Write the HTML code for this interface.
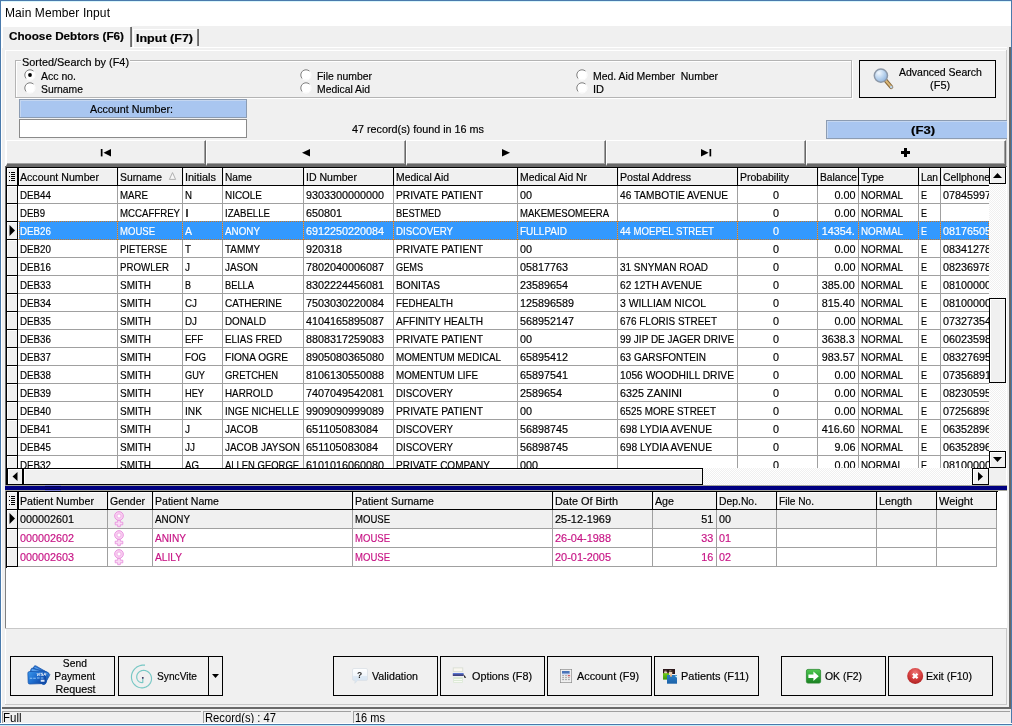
<!DOCTYPE html>
<html><head><meta charset="utf-8"><title>Main Member Input</title>
<style>
html,body{margin:0;padding:0;}
body{width:1012px;height:726px;overflow:hidden;background:#f0f0f0;position:relative;font-family:"Liberation Sans",sans-serif;font-size:11px;color:#000;}
div{position:absolute;box-sizing:border-box;}
.t{white-space:nowrap;line-height:13px;font-size:11px;-webkit-text-stroke:0.18px;}
.c{overflow:hidden;white-space:nowrap;line-height:13px;font-size:11px;-webkit-text-stroke:0.18px;}
.dith{background-image:repeating-conic-gradient(#ffffff 0 25%,#f0f0f0 0 50%);background-size:2px 2px;}
.btn{border:1px solid #000;background:#f0f0f0;}
.nav{background:#f0f0f0;border-top:1px solid #fff;border-left:1px solid #fff;border-right:1px solid #696969;border-bottom:2px solid #696969;box-shadow:inset -1px -1px 0 #a0a0a0;}
svg{position:absolute;overflow:visible;}
#w{left:0;top:0;width:1012px;height:726px;will-change:transform;}
</style></head><body><div id="w">

<div style="left:0px;top:0px;width:1012px;height:26px;background:#fff;"></div>
<div style="left:0px;top:0px;width:1012px;height:1px;background:#4a7aac;"></div>
<div style="left:1px;top:1px;width:1010px;height:1px;background:#d8f6fc;"></div>
<div style="left:0px;top:0px;width:1px;height:726px;background:#4a7aac;"></div>
<div style="left:1011px;top:0px;width:1px;height:726px;background:#4a7aac;"></div>
<div style="left:1px;top:26px;width:1px;height:699px;background:#fff;"></div>
<div class="t" style="left:5px;top:6px;font-size:12px;line-height:14px;letter-spacing:0.1px;-webkit-text-stroke:0;">Main Member Input</div>
<div style="left:2px;top:26px;width:129px;height:22px;border-top:1px solid #fff;border-left:1px solid #fff;"></div>
<div style="left:130px;top:27px;width:2px;height:20px;border-left:1px solid #808080;border-right:1px solid #696969;"></div>
<div class="t" style="left:9px;top:30px;font-weight:bold;"><span style="display:inline-block;transform:scaleX(1.063);transform-origin:0 50%;white-space:pre">Choose Debtors (F6)</span></div>
<div style="left:133px;top:29px;width:66px;height:18px;border-top:1px solid #fff;border-left:1px solid #fff;"></div>
<div style="left:197px;top:29px;width:2px;height:17px;border-left:1px solid #808080;border-right:1px solid #696969;"></div>
<div class="t" style="left:136px;top:32px;font-weight:bold;"><span style="display:inline-block;transform:scaleX(1.138);transform-origin:0 50%;white-space:pre">Input (F7)</span></div>
<div style="left:131px;top:47px;width:876px;height:1px;background:#fff;"></div>
<div style="left:5px;top:50px;width:1002px;height:1px;background:#fff;"></div>
<div style="left:5px;top:50px;width:1px;height:655px;background:#fff;"></div>
<div style="left:1006px;top:50px;width:1px;height:655px;background:#c8c8c8;"></div>
<div style="left:5px;top:704px;width:1002px;height:1px;background:#c8c8c8;"></div>
<div style="left:1009px;top:47px;width:2px;height:662px;background:#696969;"></div>
<div style="left:2px;top:707px;width:1009px;height:2px;background:#696969;"></div>
<div style="left:15px;top:60px;width:837px;height:38px;border:1px solid #b4b4b4;box-shadow:1px 1px 0 #fff, inset 1px 1px 0 #fff;"></div>
<div style="left:21px;top:56px;width:109px;height:12px;background:#f0f0f0;"></div>
<div class="t" style="left:22px;top:56px;"><span style="display:inline-block;transform:scaleX(0.989);transform-origin:0 50%;white-space:pre">Sorted/Search by (F4)</span></div>
<svg style="left:24px;top:69px" width="12" height="12" viewBox="0 0 12 12"><circle cx="6" cy="6" r="4.8" fill="#fff"/><path d="M2.3 9.7 A5.2 5.2 0 0 1 9.7 2.3" fill="none" stroke="#808080" stroke-width="1"/><path d="M2.3 9.7 A5.2 5.2 0 0 0 9.7 2.3" fill="none" stroke="#fbfbfb" stroke-width="1"/><circle cx="6" cy="6" r="1.9" fill="#000"/></svg>
<svg style="left:24px;top:82px" width="12" height="12" viewBox="0 0 12 12"><circle cx="6" cy="6" r="4.8" fill="#fff"/><path d="M2.3 9.7 A5.2 5.2 0 0 1 9.7 2.3" fill="none" stroke="#808080" stroke-width="1"/><path d="M2.3 9.7 A5.2 5.2 0 0 0 9.7 2.3" fill="none" stroke="#fbfbfb" stroke-width="1"/></svg>
<div class="t" style="left:41px;top:70px;"><span style="display:inline-block;transform:scaleX(0.954);transform-origin:0 50%;white-space:pre">Acc no.</span></div>
<div class="t" style="left:41px;top:83px;"><span style="display:inline-block;transform:scaleX(0.941);transform-origin:0 50%;white-space:pre">Surname</span></div>
<svg style="left:300px;top:69px" width="12" height="12" viewBox="0 0 12 12"><circle cx="6" cy="6" r="4.8" fill="#fff"/><path d="M2.3 9.7 A5.2 5.2 0 0 1 9.7 2.3" fill="none" stroke="#808080" stroke-width="1"/><path d="M2.3 9.7 A5.2 5.2 0 0 0 9.7 2.3" fill="none" stroke="#fbfbfb" stroke-width="1"/></svg>
<svg style="left:300px;top:82px" width="12" height="12" viewBox="0 0 12 12"><circle cx="6" cy="6" r="4.8" fill="#fff"/><path d="M2.3 9.7 A5.2 5.2 0 0 1 9.7 2.3" fill="none" stroke="#808080" stroke-width="1"/><path d="M2.3 9.7 A5.2 5.2 0 0 0 9.7 2.3" fill="none" stroke="#fbfbfb" stroke-width="1"/></svg>
<div class="t" style="left:317px;top:70px;"><span style="display:inline-block;transform:scaleX(0.947);transform-origin:0 50%;white-space:pre">File number</span></div>
<div class="t" style="left:317px;top:83px;"><span style="display:inline-block;transform:scaleX(0.942);transform-origin:0 50%;white-space:pre">Medical Aid</span></div>
<svg style="left:576px;top:69px" width="12" height="12" viewBox="0 0 12 12"><circle cx="6" cy="6" r="4.8" fill="#fff"/><path d="M2.3 9.7 A5.2 5.2 0 0 1 9.7 2.3" fill="none" stroke="#808080" stroke-width="1"/><path d="M2.3 9.7 A5.2 5.2 0 0 0 9.7 2.3" fill="none" stroke="#fbfbfb" stroke-width="1"/></svg>
<svg style="left:576px;top:82px" width="12" height="12" viewBox="0 0 12 12"><circle cx="6" cy="6" r="4.8" fill="#fff"/><path d="M2.3 9.7 A5.2 5.2 0 0 1 9.7 2.3" fill="none" stroke="#808080" stroke-width="1"/><path d="M2.3 9.7 A5.2 5.2 0 0 0 9.7 2.3" fill="none" stroke="#fbfbfb" stroke-width="1"/></svg>
<div class="t" style="left:593px;top:70px;"><span style="display:inline-block;transform:scaleX(0.951);transform-origin:0 50%;white-space:pre">Med. Aid Member  Number</span></div>
<div class="t" style="left:593px;top:83px;"><span style="display:inline-block;transform:scaleX(1.000);transform-origin:0 50%;white-space:pre">ID</span></div>
<div class="btn" style="left:859px;top:60px;width:137px;height:38px;"></div>
<div class="t" style="left:893px;top:66px;width:94px;text-align:center;"><span style="display:inline-block;transform:scaleX(0.956);transform-origin:50% 50%;white-space:pre">Advanced Search</span></div>
<div class="t" style="left:893px;top:79px;width:94px;text-align:center;"><span style="display:inline-block;transform:scaleX(0.992);transform-origin:50% 50%;white-space:pre">(F5)</span></div>
<svg style="left:873px;top:67px" width="22" height="23" viewBox="0 0 22 23">
<defs><radialGradient id="gl" cx="35%" cy="30%" r="75%"><stop offset="0" stop-color="#f2f8fe"/><stop offset="0.55" stop-color="#b9d3ee"/><stop offset="1" stop-color="#8fb2dc"/></radialGradient></defs>
<line x1="12.6" y1="13.4" x2="18.2" y2="20" stroke="#8a6c40" stroke-width="4.2" stroke-linecap="round"/>
<line x1="12.8" y1="13.6" x2="18" y2="19.6" stroke="#dcb877" stroke-width="2" stroke-linecap="round"/>
<circle cx="18.3" cy="20.1" r="1.3" fill="#b9d3ee"/>
<circle cx="7.9" cy="8.6" r="6.6" fill="url(#gl)" stroke="#8c98a8" stroke-width="1.5"/>
</svg>
<div style="left:19px;top:99px;width:228px;height:19px;background:#a9c6f0;border:1px solid #8c9cb2;box-shadow:inset 1px 1px 0 #c4d6f0;"></div>
<div class="t" style="left:17px;top:103px;width:228px;text-align:center;"><span style="display:inline-block;transform:scaleX(0.977);transform-origin:50% 50%;white-space:pre">Account Number:</span></div>
<div style="left:19px;top:119px;width:228px;height:19px;background:#fff;border:1px solid #8a8a8a;"></div>
<div class="t" style="left:352px;top:123px;"><span style="display:inline-block;transform:scaleX(0.981);transform-origin:0 50%;white-space:pre">47 record(s) found in 16 ms</span></div>
<div style="left:826px;top:120px;width:181px;height:19px;background:#a9c6f0;border:1px solid #8c9cb2;border-right:0;box-shadow:inset 1px 1px 0 #c4d6f0;"></div>
<div class="t" style="left:833px;top:124px;width:181px;text-align:center;font-weight:bold;"><span style="display:inline-block;transform:scaleX(1.190);transform-origin:50% 50%;white-space:pre">(F3)</span></div>
<div class="nav" style="left:6px;top:140px;width:200px;height:26px;"></div>
<svg style="left:101px;top:149px" width="10" height="10" viewBox="0 0 10 10"><rect x="-0.2" y="0" width="1.7" height="7.4" fill="#000"/><path d="M10 0 L10 7.4 L2.5 3.7 Z" fill="#000"/></svg>
<div class="nav" style="left:206px;top:140px;width:200px;height:26px;"></div>
<svg style="left:301px;top:149px" width="10" height="10" viewBox="0 0 10 10"><path d="M9 0 L9 7.4 L1 3.7 Z" fill="#000"/></svg>
<div class="nav" style="left:406px;top:140px;width:200px;height:26px;"></div>
<svg style="left:501px;top:149px" width="10" height="10" viewBox="0 0 10 10"><path d="M1 0 L1 7.4 L9 3.7 Z" fill="#000"/></svg>
<div class="nav" style="left:606px;top:140px;width:200px;height:26px;"></div>
<svg style="left:701px;top:149px" width="10" height="10" viewBox="0 0 10 10"><path d="M0 0 L0 7.4 L7.6 3.7 Z" fill="#000"/><rect x="8.5" y="0" width="1.7" height="7.4" fill="#000"/></svg>
<div class="nav" style="left:806px;top:140px;width:200px;height:26px;"></div>
<svg style="left:901px;top:148px" width="10" height="10" viewBox="0 0 10 10"><path d="M3 0 h3 v3 h3 v3 h-3 v3 h-3 v-3 h-3 v-3 h3 Z" fill="#000"/></svg>
<div style="left:5px;top:166px;width:1002px;height:320px;background:#fff;"></div>
<div style="left:5px;top:166px;width:1002px;height:1px;background:#696969;"></div>
<div style="left:5px;top:166px;width:1px;height:320px;background:#696969;"></div>
<div style="left:6px;top:167px;width:1000px;height:1px;background:#000;"></div>
<div style="left:6px;top:167px;width:1px;height:318px;background:#000;"></div>
<div style="left:7px;top:168px;width:982px;height:17px;background:#f0f0f0;"></div>
<div style="left:7px;top:168px;width:10px;height:17px;box-shadow:inset 1px 1px 0 #fff;"></div>
<div style="left:19px;top:168px;width:98px;height:17px;box-shadow:inset 1px 1px 0 #fff;"></div>
<div style="left:119px;top:168px;width:63px;height:17px;box-shadow:inset 1px 1px 0 #fff;"></div>
<div style="left:184px;top:168px;width:38px;height:17px;box-shadow:inset 1px 1px 0 #fff;"></div>
<div style="left:224px;top:168px;width:79px;height:17px;box-shadow:inset 1px 1px 0 #fff;"></div>
<div style="left:305px;top:168px;width:88px;height:17px;box-shadow:inset 1px 1px 0 #fff;"></div>
<div style="left:395px;top:168px;width:122px;height:17px;box-shadow:inset 1px 1px 0 #fff;"></div>
<div style="left:519px;top:168px;width:98px;height:17px;box-shadow:inset 1px 1px 0 #fff;"></div>
<div style="left:619px;top:168px;width:118px;height:17px;box-shadow:inset 1px 1px 0 #fff;"></div>
<div style="left:739px;top:168px;width:78px;height:17px;box-shadow:inset 1px 1px 0 #fff;"></div>
<div style="left:819px;top:168px;width:39px;height:17px;box-shadow:inset 1px 1px 0 #fff;"></div>
<div style="left:860px;top:168px;width:58px;height:17px;box-shadow:inset 1px 1px 0 #fff;"></div>
<div style="left:920px;top:168px;width:20px;height:17px;box-shadow:inset 1px 1px 0 #fff;"></div>
<div style="left:942px;top:168px;width:47px;height:17px;box-shadow:inset 1px 1px 0 #fff;"></div>
<div style="left:7px;top:185px;width:982px;height:1px;background:#000;"></div>
<div style="left:17px;top:168px;width:2px;height:18px;background:#000;"></div>
<div style="left:117px;top:168px;width:1px;height:18px;background:#000;"></div>
<div class="c" style="left:20px;top:171px;width:97px;height:14px"><span style="display:inline-block;transform:scaleX(0.964);transform-origin:0 50%;white-space:pre">Account Number</span></div>
<div style="left:182px;top:168px;width:1px;height:18px;background:#000;"></div>
<div class="c" style="left:120px;top:171px;width:62px;height:14px"><span style="display:inline-block;transform:scaleX(0.941);transform-origin:0 50%;white-space:pre">Surname</span></div>
<div style="left:222px;top:168px;width:1px;height:18px;background:#000;"></div>
<div class="c" style="left:185px;top:171px;width:37px;height:14px"><span style="display:inline-block;transform:scaleX(0.994);transform-origin:0 50%;white-space:pre">Initials</span></div>
<div style="left:303px;top:168px;width:1px;height:18px;background:#000;"></div>
<div class="c" style="left:225px;top:171px;width:78px;height:14px"><span style="display:inline-block;transform:scaleX(0.920);transform-origin:0 50%;white-space:pre">Name</span></div>
<div style="left:393px;top:168px;width:1px;height:18px;background:#000;"></div>
<div class="c" style="left:306px;top:171px;width:87px;height:14px"><span style="display:inline-block;transform:scaleX(0.959);transform-origin:0 50%;white-space:pre">ID Number</span></div>
<div style="left:517px;top:168px;width:1px;height:18px;background:#000;"></div>
<div class="c" style="left:396px;top:171px;width:121px;height:14px"><span style="display:inline-block;transform:scaleX(0.942);transform-origin:0 50%;white-space:pre">Medical Aid</span></div>
<div style="left:617px;top:168px;width:1px;height:18px;background:#000;"></div>
<div class="c" style="left:520px;top:171px;width:97px;height:14px"><span style="display:inline-block;transform:scaleX(0.945);transform-origin:0 50%;white-space:pre">Medical Aid Nr</span></div>
<div style="left:737px;top:168px;width:1px;height:18px;background:#000;"></div>
<div class="c" style="left:620px;top:171px;width:117px;height:14px"><span style="display:inline-block;transform:scaleX(0.968);transform-origin:0 50%;white-space:pre">Postal Address</span></div>
<div style="left:817px;top:168px;width:1px;height:18px;background:#000;"></div>
<div class="c" style="left:740px;top:171px;width:77px;height:14px"><span style="display:inline-block;transform:scaleX(0.954);transform-origin:0 50%;white-space:pre">Probability</span></div>
<div style="left:858px;top:168px;width:1px;height:18px;background:#000;"></div>
<div class="c" style="left:820px;top:171px;width:38px;height:14px"><span style="display:inline-block;transform:scaleX(0.931);transform-origin:0 50%;white-space:pre">Balance</span></div>
<div style="left:918px;top:168px;width:1px;height:18px;background:#000;"></div>
<div class="c" style="left:861px;top:171px;width:57px;height:14px"><span style="display:inline-block;transform:scaleX(0.965);transform-origin:0 50%;white-space:pre">Type</span></div>
<div style="left:940px;top:168px;width:1px;height:18px;background:#000;"></div>
<div class="c" style="left:921px;top:171px;width:19px;height:14px"><span style="display:inline-block;transform:scaleX(0.926);transform-origin:0 50%;white-space:pre">Lan</span></div>
<div style="left:989px;top:168px;width:1px;height:18px;background:#000;"></div>
<div class="c" style="left:943px;top:171px;width:46px;height:14px"><span style="display:inline-block;transform:scaleX(0.949);transform-origin:0 50%;white-space:pre">Cellphone</span></div>
<svg style="left:169px;top:172px" width="8" height="8" viewBox="0 0 8 8"><path d="M3.5 0.6 L6.6 7.4 L0.4 7.4 Z" fill="#f8f8f8" stroke="#a8a8a8" stroke-width="0.9"/></svg>
<svg style="left:9px;top:172px" width="8" height="9" viewBox="0 0 8 9" shape-rendering="crispEdges"><g fill="#000"><rect x="0" y="0" width="1" height="1"/><rect x="0" y="4" width="1" height="1"/><rect x="0" y="8" width="1" height="1"/><rect x="2" y="0" width="4" height="1"/><rect x="2" y="2" width="4" height="1"/><rect x="2" y="4" width="4" height="1"/><rect x="2" y="6" width="4" height="1"/><rect x="2" y="8" width="4" height="1"/></g></svg>
<div style="left:7px;top:186px;width:982px;height:282px;overflow:hidden;">
<div style="left:0;top:0px;width:10px;height:17px;background:#f0f0f0;box-shadow:inset 1px 1px 0 #fff"></div>
<div style="left:0;top:17px;width:982px;height:1px;background:#a0a0a0"></div>
<div style="left:0;top:17px;width:11px;height:1px;background:#000"></div>
<div class="c" style="left:12.5px;top:3px;width:97.5px;height:15px;"><span style="display:inline-block;transform:scaleX(0.889);transform-origin:0 50%;white-space:pre">DEB44</span></div>
<div class="c" style="left:112.5px;top:3px;width:62.5px;height:15px;"><span style="display:inline-block;transform:scaleX(0.881);transform-origin:0 50%;white-space:pre">MARE</span></div>
<div class="c" style="left:177.5px;top:3px;width:37.5px;height:15px;"><span style="display:inline-block;transform:scaleX(0.881);transform-origin:0 50%;white-space:pre">N</span></div>
<div class="c" style="left:217.5px;top:3px;width:78.5px;height:15px;"><span style="display:inline-block;transform:scaleX(0.903);transform-origin:0 50%;white-space:pre">NICOLE</span></div>
<div class="c" style="left:298.5px;top:3px;width:87.5px;height:15px;"><span style="display:inline-block;transform:scaleX(0.981);transform-origin:0 50%;white-space:pre">9303300000000</span></div>
<div class="c" style="left:388.5px;top:3px;width:121.5px;height:15px;"><span style="display:inline-block;transform:scaleX(0.932);transform-origin:0 50%;white-space:pre">PRIVATE PATIENT</span></div>
<div class="c" style="left:512.5px;top:3px;width:97.5px;height:15px;"><span style="display:inline-block;transform:scaleX(0.981);transform-origin:0 50%;white-space:pre">00</span></div>
<div class="c" style="left:612.5px;top:3px;width:117.5px;height:15px;"><span style="display:inline-block;transform:scaleX(0.920);transform-origin:0 50%;white-space:pre">46 TAMBOTIE AVENUE</span></div>
<div class="c" style="left:732.5px;top:3px;width:77.5px;height:15px;text-align:center;padding-right:4px;"><span style="display:inline-block;transform:scaleX(0.981);transform-origin:50% 50%;white-space:pre">0</span></div>
<div class="c" style="left:812.5px;top:3px;width:38.5px;height:15px;text-align:right;padding-right:3px;"><span style="display:inline-block;transform:scaleX(0.981);transform-origin:100% 50%;white-space:pre">0.00</span></div>
<div class="c" style="left:853.5px;top:3px;width:57.5px;height:15px;"><span style="display:inline-block;transform:scaleX(0.892);transform-origin:0 50%;white-space:pre">NORMAL</span></div>
<div class="c" style="left:913.5px;top:3px;width:19.5px;height:15px;"><span style="display:inline-block;transform:scaleX(0.818);transform-origin:0 50%;white-space:pre">E</span></div>
<div class="c" style="left:935.5px;top:3px;width:46.5px;height:15px;"><span style="display:inline-block;transform:scaleX(0.981);transform-origin:0 50%;white-space:pre">0784599700</span></div>
<div style="left:0;top:18px;width:10px;height:17px;background:#f0f0f0;box-shadow:inset 1px 1px 0 #fff"></div>
<div style="left:0;top:35px;width:982px;height:1px;background:#a0a0a0"></div>
<div style="left:0;top:35px;width:11px;height:1px;background:#000"></div>
<div class="c" style="left:12.5px;top:21px;width:97.5px;height:15px;"><span style="display:inline-block;transform:scaleX(0.870);transform-origin:0 50%;white-space:pre">DEB9</span></div>
<div class="c" style="left:112.5px;top:21px;width:62.5px;height:15px;"><span style="display:inline-block;transform:scaleX(0.877);transform-origin:0 50%;white-space:pre">MCCAFFREY</span></div>
<div class="c" style="left:177.5px;top:21px;width:37.5px;height:15px;"><span style="display:inline-block;transform:scaleX(1.309);transform-origin:0 50%;white-space:pre">I</span></div>
<div class="c" style="left:217.5px;top:21px;width:78.5px;height:15px;"><span style="display:inline-block;transform:scaleX(0.876);transform-origin:0 50%;white-space:pre">IZABELLE</span></div>
<div class="c" style="left:298.5px;top:21px;width:87.5px;height:15px;"><span style="display:inline-block;transform:scaleX(0.981);transform-origin:0 50%;white-space:pre">650801</span></div>
<div class="c" style="left:388.5px;top:21px;width:121.5px;height:15px;"><span style="display:inline-block;transform:scaleX(0.846);transform-origin:0 50%;white-space:pre">BESTMED</span></div>
<div class="c" style="left:512.5px;top:21px;width:97.5px;height:15px;"><span style="display:inline-block;transform:scaleX(0.867);transform-origin:0 50%;white-space:pre">MAKEMESOMEERA</span></div>
<div class="c" style="left:732.5px;top:21px;width:77.5px;height:15px;text-align:center;padding-right:4px;"><span style="display:inline-block;transform:scaleX(0.981);transform-origin:50% 50%;white-space:pre">0</span></div>
<div class="c" style="left:812.5px;top:21px;width:38.5px;height:15px;text-align:right;padding-right:3px;"><span style="display:inline-block;transform:scaleX(0.981);transform-origin:100% 50%;white-space:pre">0.00</span></div>
<div class="c" style="left:853.5px;top:21px;width:57.5px;height:15px;"><span style="display:inline-block;transform:scaleX(0.892);transform-origin:0 50%;white-space:pre">NORMAL</span></div>
<div class="c" style="left:913.5px;top:21px;width:19.5px;height:15px;"><span style="display:inline-block;transform:scaleX(0.818);transform-origin:0 50%;white-space:pre">E</span></div>
<div style="left:0;top:36px;width:10px;height:17px;background:#f0f0f0;box-shadow:inset 1px 1px 0 #fff"></div>
<div style="left:0;top:53px;width:982px;height:1px;background:#a0a0a0"></div>
<div style="left:0;top:53px;width:11px;height:1px;background:#000"></div>
<div style="left:12px;top:35px;width:970px;height:19px;background:#3399ff;border:1px dotted #c87828;"></div>
<svg style="left:2px;top:39px" width="7" height="11" viewBox="0 0 7 11"><path d="M0.5 0 L6 5.5 L0.5 11 Z" fill="#000"/></svg>
<div class="c" style="left:12.5px;top:39px;width:97.5px;height:15px;color:#fff;"><span style="display:inline-block;transform:scaleX(0.889);transform-origin:0 50%;white-space:pre">DEB26</span></div>
<div class="c" style="left:112.5px;top:39px;width:62.5px;height:15px;color:#fff;"><span style="display:inline-block;transform:scaleX(0.868);transform-origin:0 50%;white-space:pre">MOUSE</span></div>
<div class="c" style="left:177.5px;top:39px;width:37.5px;height:15px;color:#fff;"><span style="display:inline-block;transform:scaleX(0.954);transform-origin:0 50%;white-space:pre">A</span></div>
<div class="c" style="left:217.5px;top:39px;width:78.5px;height:15px;color:#fff;"><span style="display:inline-block;transform:scaleX(0.895);transform-origin:0 50%;white-space:pre">ANONY</span></div>
<div class="c" style="left:298.5px;top:39px;width:87.5px;height:15px;color:#fff;"><span style="display:inline-block;transform:scaleX(0.981);transform-origin:0 50%;white-space:pre">6912250220084</span></div>
<div class="c" style="left:388.5px;top:39px;width:121.5px;height:15px;color:#fff;"><span style="display:inline-block;transform:scaleX(0.882);transform-origin:0 50%;white-space:pre">DISCOVERY</span></div>
<div class="c" style="left:512.5px;top:39px;width:97.5px;height:15px;color:#fff;"><span style="display:inline-block;transform:scaleX(0.908);transform-origin:0 50%;white-space:pre">FULLPAID</span></div>
<div class="c" style="left:612.5px;top:39px;width:117.5px;height:15px;color:#fff;"><span style="display:inline-block;transform:scaleX(0.877);transform-origin:0 50%;white-space:pre">44 MOEPEL STREET</span></div>
<div class="c" style="left:732.5px;top:39px;width:77.5px;height:15px;text-align:center;padding-right:4px;color:#fff;"><span style="display:inline-block;transform:scaleX(0.981);transform-origin:50% 50%;white-space:pre">0</span></div>
<div class="c" style="left:812.5px;top:39px;width:38.5px;height:15px;text-align:right;padding-right:3px;color:#fff;"><span style="display:inline-block;transform:scaleX(0.981);transform-origin:100% 50%;white-space:pre">14354.</span></div>
<div class="c" style="left:853.5px;top:39px;width:57.5px;height:15px;color:#fff;"><span style="display:inline-block;transform:scaleX(0.892);transform-origin:0 50%;white-space:pre">NORMAL</span></div>
<div class="c" style="left:913.5px;top:39px;width:19.5px;height:15px;color:#fff;"><span style="display:inline-block;transform:scaleX(0.818);transform-origin:0 50%;white-space:pre">E</span></div>
<div class="c" style="left:935.5px;top:39px;width:46.5px;height:15px;color:#fff;"><span style="display:inline-block;transform:scaleX(0.981);transform-origin:0 50%;white-space:pre">0817650500</span></div>
<div style="left:0;top:54px;width:10px;height:17px;background:#f0f0f0;box-shadow:inset 1px 1px 0 #fff"></div>
<div style="left:0;top:71px;width:982px;height:1px;background:#a0a0a0"></div>
<div style="left:0;top:71px;width:11px;height:1px;background:#000"></div>
<div class="c" style="left:12.5px;top:57px;width:97.5px;height:15px;"><span style="display:inline-block;transform:scaleX(0.889);transform-origin:0 50%;white-space:pre">DEB20</span></div>
<div class="c" style="left:112.5px;top:57px;width:62.5px;height:15px;"><span style="display:inline-block;transform:scaleX(0.864);transform-origin:0 50%;white-space:pre">PIETERSE</span></div>
<div class="c" style="left:177.5px;top:57px;width:37.5px;height:15px;"><span style="display:inline-block;transform:scaleX(0.893);transform-origin:0 50%;white-space:pre">T</span></div>
<div class="c" style="left:217.5px;top:57px;width:78.5px;height:15px;"><span style="display:inline-block;transform:scaleX(0.900);transform-origin:0 50%;white-space:pre">TAMMY</span></div>
<div class="c" style="left:298.5px;top:57px;width:87.5px;height:15px;"><span style="display:inline-block;transform:scaleX(0.981);transform-origin:0 50%;white-space:pre">920318</span></div>
<div class="c" style="left:388.5px;top:57px;width:121.5px;height:15px;"><span style="display:inline-block;transform:scaleX(0.932);transform-origin:0 50%;white-space:pre">PRIVATE PATIENT</span></div>
<div class="c" style="left:512.5px;top:57px;width:97.5px;height:15px;"><span style="display:inline-block;transform:scaleX(0.981);transform-origin:0 50%;white-space:pre">00</span></div>
<div class="c" style="left:732.5px;top:57px;width:77.5px;height:15px;text-align:center;padding-right:4px;"><span style="display:inline-block;transform:scaleX(0.981);transform-origin:50% 50%;white-space:pre">0</span></div>
<div class="c" style="left:812.5px;top:57px;width:38.5px;height:15px;text-align:right;padding-right:3px;"><span style="display:inline-block;transform:scaleX(0.981);transform-origin:100% 50%;white-space:pre">0.00</span></div>
<div class="c" style="left:853.5px;top:57px;width:57.5px;height:15px;"><span style="display:inline-block;transform:scaleX(0.892);transform-origin:0 50%;white-space:pre">NORMAL</span></div>
<div class="c" style="left:913.5px;top:57px;width:19.5px;height:15px;"><span style="display:inline-block;transform:scaleX(0.818);transform-origin:0 50%;white-space:pre">E</span></div>
<div class="c" style="left:935.5px;top:57px;width:46.5px;height:15px;"><span style="display:inline-block;transform:scaleX(0.981);transform-origin:0 50%;white-space:pre">0834127800</span></div>
<div style="left:0;top:72px;width:10px;height:17px;background:#f0f0f0;box-shadow:inset 1px 1px 0 #fff"></div>
<div style="left:0;top:89px;width:982px;height:1px;background:#a0a0a0"></div>
<div style="left:0;top:89px;width:11px;height:1px;background:#000"></div>
<div class="c" style="left:12.5px;top:75px;width:97.5px;height:15px;"><span style="display:inline-block;transform:scaleX(0.889);transform-origin:0 50%;white-space:pre">DEB16</span></div>
<div class="c" style="left:112.5px;top:75px;width:62.5px;height:15px;"><span style="display:inline-block;transform:scaleX(0.881);transform-origin:0 50%;white-space:pre">PROWLER</span></div>
<div class="c" style="left:177.5px;top:75px;width:37.5px;height:15px;"><span style="display:inline-block;transform:scaleX(0.909);transform-origin:0 50%;white-space:pre">J</span></div>
<div class="c" style="left:217.5px;top:75px;width:78.5px;height:15px;"><span style="display:inline-block;transform:scaleX(0.900);transform-origin:0 50%;white-space:pre">JASON</span></div>
<div class="c" style="left:298.5px;top:75px;width:87.5px;height:15px;"><span style="display:inline-block;transform:scaleX(0.981);transform-origin:0 50%;white-space:pre">7802040006087</span></div>
<div class="c" style="left:388.5px;top:75px;width:121.5px;height:15px;"><span style="display:inline-block;transform:scaleX(0.834);transform-origin:0 50%;white-space:pre">GEMS</span></div>
<div class="c" style="left:512.5px;top:75px;width:97.5px;height:15px;"><span style="display:inline-block;transform:scaleX(0.981);transform-origin:0 50%;white-space:pre">05817763</span></div>
<div class="c" style="left:612.5px;top:75px;width:117.5px;height:15px;"><span style="display:inline-block;transform:scaleX(0.905);transform-origin:0 50%;white-space:pre">31 SNYMAN ROAD</span></div>
<div class="c" style="left:732.5px;top:75px;width:77.5px;height:15px;text-align:center;padding-right:4px;"><span style="display:inline-block;transform:scaleX(0.981);transform-origin:50% 50%;white-space:pre">0</span></div>
<div class="c" style="left:812.5px;top:75px;width:38.5px;height:15px;text-align:right;padding-right:3px;"><span style="display:inline-block;transform:scaleX(0.981);transform-origin:100% 50%;white-space:pre">0.00</span></div>
<div class="c" style="left:853.5px;top:75px;width:57.5px;height:15px;"><span style="display:inline-block;transform:scaleX(0.892);transform-origin:0 50%;white-space:pre">NORMAL</span></div>
<div class="c" style="left:913.5px;top:75px;width:19.5px;height:15px;"><span style="display:inline-block;transform:scaleX(0.818);transform-origin:0 50%;white-space:pre">E</span></div>
<div class="c" style="left:935.5px;top:75px;width:46.5px;height:15px;"><span style="display:inline-block;transform:scaleX(0.981);transform-origin:0 50%;white-space:pre">0823697800</span></div>
<div style="left:0;top:90px;width:10px;height:17px;background:#f0f0f0;box-shadow:inset 1px 1px 0 #fff"></div>
<div style="left:0;top:107px;width:982px;height:1px;background:#a0a0a0"></div>
<div style="left:0;top:107px;width:11px;height:1px;background:#000"></div>
<div class="c" style="left:12.5px;top:93px;width:97.5px;height:15px;"><span style="display:inline-block;transform:scaleX(0.889);transform-origin:0 50%;white-space:pre">DEB33</span></div>
<div class="c" style="left:112.5px;top:93px;width:62.5px;height:15px;"><span style="display:inline-block;transform:scaleX(0.906);transform-origin:0 50%;white-space:pre">SMITH</span></div>
<div class="c" style="left:177.5px;top:93px;width:37.5px;height:15px;"><span style="display:inline-block;transform:scaleX(0.818);transform-origin:0 50%;white-space:pre">B</span></div>
<div class="c" style="left:217.5px;top:93px;width:78.5px;height:15px;"><span style="display:inline-block;transform:scaleX(0.847);transform-origin:0 50%;white-space:pre">BELLA</span></div>
<div class="c" style="left:298.5px;top:93px;width:87.5px;height:15px;"><span style="display:inline-block;transform:scaleX(0.981);transform-origin:0 50%;white-space:pre">8302224456081</span></div>
<div class="c" style="left:388.5px;top:93px;width:121.5px;height:15px;"><span style="display:inline-block;transform:scaleX(0.927);transform-origin:0 50%;white-space:pre">BONITAS</span></div>
<div class="c" style="left:512.5px;top:93px;width:97.5px;height:15px;"><span style="display:inline-block;transform:scaleX(0.981);transform-origin:0 50%;white-space:pre">23589654</span></div>
<div class="c" style="left:612.5px;top:93px;width:117.5px;height:15px;"><span style="display:inline-block;transform:scaleX(0.921);transform-origin:0 50%;white-space:pre">62 12TH AVENUE</span></div>
<div class="c" style="left:732.5px;top:93px;width:77.5px;height:15px;text-align:center;padding-right:4px;"><span style="display:inline-block;transform:scaleX(0.981);transform-origin:50% 50%;white-space:pre">0</span></div>
<div class="c" style="left:812.5px;top:93px;width:38.5px;height:15px;text-align:right;padding-right:3px;"><span style="display:inline-block;transform:scaleX(0.981);transform-origin:100% 50%;white-space:pre">385.00</span></div>
<div class="c" style="left:853.5px;top:93px;width:57.5px;height:15px;"><span style="display:inline-block;transform:scaleX(0.892);transform-origin:0 50%;white-space:pre">NORMAL</span></div>
<div class="c" style="left:913.5px;top:93px;width:19.5px;height:15px;"><span style="display:inline-block;transform:scaleX(0.818);transform-origin:0 50%;white-space:pre">E</span></div>
<div class="c" style="left:935.5px;top:93px;width:46.5px;height:15px;"><span style="display:inline-block;transform:scaleX(0.981);transform-origin:0 50%;white-space:pre">0810000000</span></div>
<div style="left:0;top:108px;width:10px;height:17px;background:#f0f0f0;box-shadow:inset 1px 1px 0 #fff"></div>
<div style="left:0;top:125px;width:982px;height:1px;background:#a0a0a0"></div>
<div style="left:0;top:125px;width:11px;height:1px;background:#000"></div>
<div class="c" style="left:12.5px;top:111px;width:97.5px;height:15px;"><span style="display:inline-block;transform:scaleX(0.889);transform-origin:0 50%;white-space:pre">DEB34</span></div>
<div class="c" style="left:112.5px;top:111px;width:62.5px;height:15px;"><span style="display:inline-block;transform:scaleX(0.906);transform-origin:0 50%;white-space:pre">SMITH</span></div>
<div class="c" style="left:177.5px;top:111px;width:37.5px;height:15px;"><span style="display:inline-block;transform:scaleX(0.893);transform-origin:0 50%;white-space:pre">CJ</span></div>
<div class="c" style="left:217.5px;top:111px;width:78.5px;height:15px;"><span style="display:inline-block;transform:scaleX(0.908);transform-origin:0 50%;white-space:pre">CATHERINE</span></div>
<div class="c" style="left:298.5px;top:111px;width:87.5px;height:15px;"><span style="display:inline-block;transform:scaleX(0.981);transform-origin:0 50%;white-space:pre">7503030220084</span></div>
<div class="c" style="left:388.5px;top:111px;width:121.5px;height:15px;"><span style="display:inline-block;transform:scaleX(0.883);transform-origin:0 50%;white-space:pre">FEDHEALTH</span></div>
<div class="c" style="left:512.5px;top:111px;width:97.5px;height:15px;"><span style="display:inline-block;transform:scaleX(0.981);transform-origin:0 50%;white-space:pre">125896589</span></div>
<div class="c" style="left:612.5px;top:111px;width:117.5px;height:15px;"><span style="display:inline-block;transform:scaleX(0.944);transform-origin:0 50%;white-space:pre">3 WILLIAM NICOL</span></div>
<div class="c" style="left:732.5px;top:111px;width:77.5px;height:15px;text-align:center;padding-right:4px;"><span style="display:inline-block;transform:scaleX(0.981);transform-origin:50% 50%;white-space:pre">0</span></div>
<div class="c" style="left:812.5px;top:111px;width:38.5px;height:15px;text-align:right;padding-right:3px;"><span style="display:inline-block;transform:scaleX(0.981);transform-origin:100% 50%;white-space:pre">815.40</span></div>
<div class="c" style="left:853.5px;top:111px;width:57.5px;height:15px;"><span style="display:inline-block;transform:scaleX(0.892);transform-origin:0 50%;white-space:pre">NORMAL</span></div>
<div class="c" style="left:913.5px;top:111px;width:19.5px;height:15px;"><span style="display:inline-block;transform:scaleX(0.818);transform-origin:0 50%;white-space:pre">E</span></div>
<div class="c" style="left:935.5px;top:111px;width:46.5px;height:15px;"><span style="display:inline-block;transform:scaleX(0.981);transform-origin:0 50%;white-space:pre">0810000000</span></div>
<div style="left:0;top:126px;width:10px;height:17px;background:#f0f0f0;box-shadow:inset 1px 1px 0 #fff"></div>
<div style="left:0;top:143px;width:982px;height:1px;background:#a0a0a0"></div>
<div style="left:0;top:143px;width:11px;height:1px;background:#000"></div>
<div class="c" style="left:12.5px;top:129px;width:97.5px;height:15px;"><span style="display:inline-block;transform:scaleX(0.889);transform-origin:0 50%;white-space:pre">DEB35</span></div>
<div class="c" style="left:112.5px;top:129px;width:62.5px;height:15px;"><span style="display:inline-block;transform:scaleX(0.906);transform-origin:0 50%;white-space:pre">SMITH</span></div>
<div class="c" style="left:177.5px;top:129px;width:37.5px;height:15px;"><span style="display:inline-block;transform:scaleX(0.893);transform-origin:0 50%;white-space:pre">DJ</span></div>
<div class="c" style="left:217.5px;top:129px;width:78.5px;height:15px;"><span style="display:inline-block;transform:scaleX(0.894);transform-origin:0 50%;white-space:pre">DONALD</span></div>
<div class="c" style="left:298.5px;top:129px;width:87.5px;height:15px;"><span style="display:inline-block;transform:scaleX(0.981);transform-origin:0 50%;white-space:pre">4104165895087</span></div>
<div class="c" style="left:388.5px;top:129px;width:121.5px;height:15px;"><span style="display:inline-block;transform:scaleX(0.922);transform-origin:0 50%;white-space:pre">AFFINITY HEALTH</span></div>
<div class="c" style="left:512.5px;top:129px;width:97.5px;height:15px;"><span style="display:inline-block;transform:scaleX(0.981);transform-origin:0 50%;white-space:pre">568952147</span></div>
<div class="c" style="left:612.5px;top:129px;width:117.5px;height:15px;"><span style="display:inline-block;transform:scaleX(0.902);transform-origin:0 50%;white-space:pre">676 FLORIS STREET</span></div>
<div class="c" style="left:732.5px;top:129px;width:77.5px;height:15px;text-align:center;padding-right:4px;"><span style="display:inline-block;transform:scaleX(0.981);transform-origin:50% 50%;white-space:pre">0</span></div>
<div class="c" style="left:812.5px;top:129px;width:38.5px;height:15px;text-align:right;padding-right:3px;"><span style="display:inline-block;transform:scaleX(0.981);transform-origin:100% 50%;white-space:pre">0.00</span></div>
<div class="c" style="left:853.5px;top:129px;width:57.5px;height:15px;"><span style="display:inline-block;transform:scaleX(0.892);transform-origin:0 50%;white-space:pre">NORMAL</span></div>
<div class="c" style="left:913.5px;top:129px;width:19.5px;height:15px;"><span style="display:inline-block;transform:scaleX(0.818);transform-origin:0 50%;white-space:pre">E</span></div>
<div class="c" style="left:935.5px;top:129px;width:46.5px;height:15px;"><span style="display:inline-block;transform:scaleX(0.981);transform-origin:0 50%;white-space:pre">0732735400</span></div>
<div style="left:0;top:144px;width:10px;height:17px;background:#f0f0f0;box-shadow:inset 1px 1px 0 #fff"></div>
<div style="left:0;top:161px;width:982px;height:1px;background:#a0a0a0"></div>
<div style="left:0;top:161px;width:11px;height:1px;background:#000"></div>
<div class="c" style="left:12.5px;top:147px;width:97.5px;height:15px;"><span style="display:inline-block;transform:scaleX(0.889);transform-origin:0 50%;white-space:pre">DEB36</span></div>
<div class="c" style="left:112.5px;top:147px;width:62.5px;height:15px;"><span style="display:inline-block;transform:scaleX(0.906);transform-origin:0 50%;white-space:pre">SMITH</span></div>
<div class="c" style="left:177.5px;top:147px;width:37.5px;height:15px;"><span style="display:inline-block;transform:scaleX(0.866);transform-origin:0 50%;white-space:pre">EFF</span></div>
<div class="c" style="left:217.5px;top:147px;width:78.5px;height:15px;"><span style="display:inline-block;transform:scaleX(0.888);transform-origin:0 50%;white-space:pre">ELIAS FRED</span></div>
<div class="c" style="left:298.5px;top:147px;width:87.5px;height:15px;"><span style="display:inline-block;transform:scaleX(0.981);transform-origin:0 50%;white-space:pre">8808317259083</span></div>
<div class="c" style="left:388.5px;top:147px;width:121.5px;height:15px;"><span style="display:inline-block;transform:scaleX(0.932);transform-origin:0 50%;white-space:pre">PRIVATE PATIENT</span></div>
<div class="c" style="left:512.5px;top:147px;width:97.5px;height:15px;"><span style="display:inline-block;transform:scaleX(0.981);transform-origin:0 50%;white-space:pre">00</span></div>
<div class="c" style="left:612.5px;top:147px;width:117.5px;height:15px;"><span style="display:inline-block;transform:scaleX(0.907);transform-origin:0 50%;white-space:pre">99 JIP DE JAGER DRIVE</span></div>
<div class="c" style="left:732.5px;top:147px;width:77.5px;height:15px;text-align:center;padding-right:4px;"><span style="display:inline-block;transform:scaleX(0.981);transform-origin:50% 50%;white-space:pre">0</span></div>
<div class="c" style="left:812.5px;top:147px;width:38.5px;height:15px;text-align:right;padding-right:3px;"><span style="display:inline-block;transform:scaleX(0.981);transform-origin:100% 50%;white-space:pre">3638.3</span></div>
<div class="c" style="left:853.5px;top:147px;width:57.5px;height:15px;"><span style="display:inline-block;transform:scaleX(0.892);transform-origin:0 50%;white-space:pre">NORMAL</span></div>
<div class="c" style="left:913.5px;top:147px;width:19.5px;height:15px;"><span style="display:inline-block;transform:scaleX(0.818);transform-origin:0 50%;white-space:pre">E</span></div>
<div class="c" style="left:935.5px;top:147px;width:46.5px;height:15px;"><span style="display:inline-block;transform:scaleX(0.981);transform-origin:0 50%;white-space:pre">0602359800</span></div>
<div style="left:0;top:162px;width:10px;height:17px;background:#f0f0f0;box-shadow:inset 1px 1px 0 #fff"></div>
<div style="left:0;top:179px;width:982px;height:1px;background:#a0a0a0"></div>
<div style="left:0;top:179px;width:11px;height:1px;background:#000"></div>
<div class="c" style="left:12.5px;top:165px;width:97.5px;height:15px;"><span style="display:inline-block;transform:scaleX(0.889);transform-origin:0 50%;white-space:pre">DEB37</span></div>
<div class="c" style="left:112.5px;top:165px;width:62.5px;height:15px;"><span style="display:inline-block;transform:scaleX(0.906);transform-origin:0 50%;white-space:pre">SMITH</span></div>
<div class="c" style="left:177.5px;top:165px;width:37.5px;height:15px;"><span style="display:inline-block;transform:scaleX(0.881);transform-origin:0 50%;white-space:pre">FOG</span></div>
<div class="c" style="left:217.5px;top:165px;width:78.5px;height:15px;"><span style="display:inline-block;transform:scaleX(0.920);transform-origin:0 50%;white-space:pre">FIONA OGRE</span></div>
<div class="c" style="left:298.5px;top:165px;width:87.5px;height:15px;"><span style="display:inline-block;transform:scaleX(0.981);transform-origin:0 50%;white-space:pre">8905080365080</span></div>
<div class="c" style="left:388.5px;top:165px;width:121.5px;height:15px;"><span style="display:inline-block;transform:scaleX(0.890);transform-origin:0 50%;white-space:pre">MOMENTUM MEDICAL</span></div>
<div class="c" style="left:512.5px;top:165px;width:97.5px;height:15px;"><span style="display:inline-block;transform:scaleX(0.981);transform-origin:0 50%;white-space:pre">65895412</span></div>
<div class="c" style="left:612.5px;top:165px;width:117.5px;height:15px;"><span style="display:inline-block;transform:scaleX(0.908);transform-origin:0 50%;white-space:pre">63 GARSFONTEIN</span></div>
<div class="c" style="left:732.5px;top:165px;width:77.5px;height:15px;text-align:center;padding-right:4px;"><span style="display:inline-block;transform:scaleX(0.981);transform-origin:50% 50%;white-space:pre">0</span></div>
<div class="c" style="left:812.5px;top:165px;width:38.5px;height:15px;text-align:right;padding-right:3px;"><span style="display:inline-block;transform:scaleX(0.981);transform-origin:100% 50%;white-space:pre">983.57</span></div>
<div class="c" style="left:853.5px;top:165px;width:57.5px;height:15px;"><span style="display:inline-block;transform:scaleX(0.892);transform-origin:0 50%;white-space:pre">NORMAL</span></div>
<div class="c" style="left:913.5px;top:165px;width:19.5px;height:15px;"><span style="display:inline-block;transform:scaleX(0.818);transform-origin:0 50%;white-space:pre">E</span></div>
<div class="c" style="left:935.5px;top:165px;width:46.5px;height:15px;"><span style="display:inline-block;transform:scaleX(0.981);transform-origin:0 50%;white-space:pre">0832769500</span></div>
<div style="left:0;top:180px;width:10px;height:17px;background:#f0f0f0;box-shadow:inset 1px 1px 0 #fff"></div>
<div style="left:0;top:197px;width:982px;height:1px;background:#a0a0a0"></div>
<div style="left:0;top:197px;width:11px;height:1px;background:#000"></div>
<div class="c" style="left:12.5px;top:183px;width:97.5px;height:15px;"><span style="display:inline-block;transform:scaleX(0.889);transform-origin:0 50%;white-space:pre">DEB38</span></div>
<div class="c" style="left:112.5px;top:183px;width:62.5px;height:15px;"><span style="display:inline-block;transform:scaleX(0.906);transform-origin:0 50%;white-space:pre">SMITH</span></div>
<div class="c" style="left:177.5px;top:183px;width:37.5px;height:15px;"><span style="display:inline-block;transform:scaleX(0.839);transform-origin:0 50%;white-space:pre">GUY</span></div>
<div class="c" style="left:217.5px;top:183px;width:78.5px;height:15px;"><span style="display:inline-block;transform:scaleX(0.859);transform-origin:0 50%;white-space:pre">GRETCHEN</span></div>
<div class="c" style="left:298.5px;top:183px;width:87.5px;height:15px;"><span style="display:inline-block;transform:scaleX(0.981);transform-origin:0 50%;white-space:pre">8106130550088</span></div>
<div class="c" style="left:388.5px;top:183px;width:121.5px;height:15px;"><span style="display:inline-block;transform:scaleX(0.889);transform-origin:0 50%;white-space:pre">MOMENTUM LIFE</span></div>
<div class="c" style="left:512.5px;top:183px;width:97.5px;height:15px;"><span style="display:inline-block;transform:scaleX(0.981);transform-origin:0 50%;white-space:pre">65897541</span></div>
<div class="c" style="left:612.5px;top:183px;width:117.5px;height:15px;"><span style="display:inline-block;transform:scaleX(0.931);transform-origin:0 50%;white-space:pre">1056 WOODHILL DRIVE</span></div>
<div class="c" style="left:732.5px;top:183px;width:77.5px;height:15px;text-align:center;padding-right:4px;"><span style="display:inline-block;transform:scaleX(0.981);transform-origin:50% 50%;white-space:pre">0</span></div>
<div class="c" style="left:812.5px;top:183px;width:38.5px;height:15px;text-align:right;padding-right:3px;"><span style="display:inline-block;transform:scaleX(0.981);transform-origin:100% 50%;white-space:pre">0.00</span></div>
<div class="c" style="left:853.5px;top:183px;width:57.5px;height:15px;"><span style="display:inline-block;transform:scaleX(0.892);transform-origin:0 50%;white-space:pre">NORMAL</span></div>
<div class="c" style="left:913.5px;top:183px;width:19.5px;height:15px;"><span style="display:inline-block;transform:scaleX(0.818);transform-origin:0 50%;white-space:pre">E</span></div>
<div class="c" style="left:935.5px;top:183px;width:46.5px;height:15px;"><span style="display:inline-block;transform:scaleX(0.981);transform-origin:0 50%;white-space:pre">0735689100</span></div>
<div style="left:0;top:198px;width:10px;height:17px;background:#f0f0f0;box-shadow:inset 1px 1px 0 #fff"></div>
<div style="left:0;top:215px;width:982px;height:1px;background:#a0a0a0"></div>
<div style="left:0;top:215px;width:11px;height:1px;background:#000"></div>
<div class="c" style="left:12.5px;top:201px;width:97.5px;height:15px;"><span style="display:inline-block;transform:scaleX(0.889);transform-origin:0 50%;white-space:pre">DEB39</span></div>
<div class="c" style="left:112.5px;top:201px;width:62.5px;height:15px;"><span style="display:inline-block;transform:scaleX(0.906);transform-origin:0 50%;white-space:pre">SMITH</span></div>
<div class="c" style="left:177.5px;top:201px;width:37.5px;height:15px;"><span style="display:inline-block;transform:scaleX(0.840);transform-origin:0 50%;white-space:pre">HEY</span></div>
<div class="c" style="left:217.5px;top:201px;width:78.5px;height:15px;"><span style="display:inline-block;transform:scaleX(0.892);transform-origin:0 50%;white-space:pre">HARROLD</span></div>
<div class="c" style="left:298.5px;top:201px;width:87.5px;height:15px;"><span style="display:inline-block;transform:scaleX(0.981);transform-origin:0 50%;white-space:pre">7407049542081</span></div>
<div class="c" style="left:388.5px;top:201px;width:121.5px;height:15px;"><span style="display:inline-block;transform:scaleX(0.882);transform-origin:0 50%;white-space:pre">DISCOVERY</span></div>
<div class="c" style="left:512.5px;top:201px;width:97.5px;height:15px;"><span style="display:inline-block;transform:scaleX(0.981);transform-origin:0 50%;white-space:pre">2589654</span></div>
<div class="c" style="left:612.5px;top:201px;width:117.5px;height:15px;"><span style="display:inline-block;transform:scaleX(0.975);transform-origin:0 50%;white-space:pre">6325 ZANINI</span></div>
<div class="c" style="left:732.5px;top:201px;width:77.5px;height:15px;text-align:center;padding-right:4px;"><span style="display:inline-block;transform:scaleX(0.981);transform-origin:50% 50%;white-space:pre">0</span></div>
<div class="c" style="left:812.5px;top:201px;width:38.5px;height:15px;text-align:right;padding-right:3px;"><span style="display:inline-block;transform:scaleX(0.981);transform-origin:100% 50%;white-space:pre">0.00</span></div>
<div class="c" style="left:853.5px;top:201px;width:57.5px;height:15px;"><span style="display:inline-block;transform:scaleX(0.892);transform-origin:0 50%;white-space:pre">NORMAL</span></div>
<div class="c" style="left:913.5px;top:201px;width:19.5px;height:15px;"><span style="display:inline-block;transform:scaleX(0.818);transform-origin:0 50%;white-space:pre">E</span></div>
<div class="c" style="left:935.5px;top:201px;width:46.5px;height:15px;"><span style="display:inline-block;transform:scaleX(0.981);transform-origin:0 50%;white-space:pre">0823059500</span></div>
<div style="left:0;top:216px;width:10px;height:17px;background:#f0f0f0;box-shadow:inset 1px 1px 0 #fff"></div>
<div style="left:0;top:233px;width:982px;height:1px;background:#a0a0a0"></div>
<div style="left:0;top:233px;width:11px;height:1px;background:#000"></div>
<div class="c" style="left:12.5px;top:219px;width:97.5px;height:15px;"><span style="display:inline-block;transform:scaleX(0.889);transform-origin:0 50%;white-space:pre">DEB40</span></div>
<div class="c" style="left:112.5px;top:219px;width:62.5px;height:15px;"><span style="display:inline-block;transform:scaleX(0.906);transform-origin:0 50%;white-space:pre">SMITH</span></div>
<div class="c" style="left:177.5px;top:219px;width:37.5px;height:15px;"><span style="display:inline-block;transform:scaleX(0.927);transform-origin:0 50%;white-space:pre">INK</span></div>
<div class="c" style="left:217.5px;top:219px;width:78.5px;height:15px;"><span style="display:inline-block;transform:scaleX(0.884);transform-origin:0 50%;white-space:pre">INGE NICHELLE</span></div>
<div class="c" style="left:298.5px;top:219px;width:87.5px;height:15px;"><span style="display:inline-block;transform:scaleX(0.981);transform-origin:0 50%;white-space:pre">9909090999089</span></div>
<div class="c" style="left:388.5px;top:219px;width:121.5px;height:15px;"><span style="display:inline-block;transform:scaleX(0.932);transform-origin:0 50%;white-space:pre">PRIVATE PATIENT</span></div>
<div class="c" style="left:512.5px;top:219px;width:97.5px;height:15px;"><span style="display:inline-block;transform:scaleX(0.981);transform-origin:0 50%;white-space:pre">00</span></div>
<div class="c" style="left:612.5px;top:219px;width:117.5px;height:15px;"><span style="display:inline-block;transform:scaleX(0.897);transform-origin:0 50%;white-space:pre">6525 MORE STREET</span></div>
<div class="c" style="left:732.5px;top:219px;width:77.5px;height:15px;text-align:center;padding-right:4px;"><span style="display:inline-block;transform:scaleX(0.981);transform-origin:50% 50%;white-space:pre">0</span></div>
<div class="c" style="left:812.5px;top:219px;width:38.5px;height:15px;text-align:right;padding-right:3px;"><span style="display:inline-block;transform:scaleX(0.981);transform-origin:100% 50%;white-space:pre">0.00</span></div>
<div class="c" style="left:853.5px;top:219px;width:57.5px;height:15px;"><span style="display:inline-block;transform:scaleX(0.892);transform-origin:0 50%;white-space:pre">NORMAL</span></div>
<div class="c" style="left:913.5px;top:219px;width:19.5px;height:15px;"><span style="display:inline-block;transform:scaleX(0.818);transform-origin:0 50%;white-space:pre">E</span></div>
<div class="c" style="left:935.5px;top:219px;width:46.5px;height:15px;"><span style="display:inline-block;transform:scaleX(0.981);transform-origin:0 50%;white-space:pre">0725689800</span></div>
<div style="left:0;top:234px;width:10px;height:17px;background:#f0f0f0;box-shadow:inset 1px 1px 0 #fff"></div>
<div style="left:0;top:251px;width:982px;height:1px;background:#a0a0a0"></div>
<div style="left:0;top:251px;width:11px;height:1px;background:#000"></div>
<div class="c" style="left:12.5px;top:237px;width:97.5px;height:15px;"><span style="display:inline-block;transform:scaleX(0.889);transform-origin:0 50%;white-space:pre">DEB41</span></div>
<div class="c" style="left:112.5px;top:237px;width:62.5px;height:15px;"><span style="display:inline-block;transform:scaleX(0.906);transform-origin:0 50%;white-space:pre">SMITH</span></div>
<div class="c" style="left:177.5px;top:237px;width:37.5px;height:15px;"><span style="display:inline-block;transform:scaleX(0.909);transform-origin:0 50%;white-space:pre">J</span></div>
<div class="c" style="left:217.5px;top:237px;width:78.5px;height:15px;"><span style="display:inline-block;transform:scaleX(0.900);transform-origin:0 50%;white-space:pre">JACOB</span></div>
<div class="c" style="left:298.5px;top:237px;width:87.5px;height:15px;"><span style="display:inline-block;transform:scaleX(0.992);transform-origin:0 50%;white-space:pre">651105083084</span></div>
<div class="c" style="left:388.5px;top:237px;width:121.5px;height:15px;"><span style="display:inline-block;transform:scaleX(0.882);transform-origin:0 50%;white-space:pre">DISCOVERY</span></div>
<div class="c" style="left:512.5px;top:237px;width:97.5px;height:15px;"><span style="display:inline-block;transform:scaleX(0.981);transform-origin:0 50%;white-space:pre">56898745</span></div>
<div class="c" style="left:612.5px;top:237px;width:117.5px;height:15px;"><span style="display:inline-block;transform:scaleX(0.933);transform-origin:0 50%;white-space:pre">698 LYDIA AVENUE</span></div>
<div class="c" style="left:732.5px;top:237px;width:77.5px;height:15px;text-align:center;padding-right:4px;"><span style="display:inline-block;transform:scaleX(0.981);transform-origin:50% 50%;white-space:pre">0</span></div>
<div class="c" style="left:812.5px;top:237px;width:38.5px;height:15px;text-align:right;padding-right:3px;"><span style="display:inline-block;transform:scaleX(0.981);transform-origin:100% 50%;white-space:pre">416.60</span></div>
<div class="c" style="left:853.5px;top:237px;width:57.5px;height:15px;"><span style="display:inline-block;transform:scaleX(0.892);transform-origin:0 50%;white-space:pre">NORMAL</span></div>
<div class="c" style="left:913.5px;top:237px;width:19.5px;height:15px;"><span style="display:inline-block;transform:scaleX(0.818);transform-origin:0 50%;white-space:pre">E</span></div>
<div class="c" style="left:935.5px;top:237px;width:46.5px;height:15px;"><span style="display:inline-block;transform:scaleX(0.981);transform-origin:0 50%;white-space:pre">0635289600</span></div>
<div style="left:0;top:252px;width:10px;height:17px;background:#f0f0f0;box-shadow:inset 1px 1px 0 #fff"></div>
<div style="left:0;top:269px;width:982px;height:1px;background:#a0a0a0"></div>
<div style="left:0;top:269px;width:11px;height:1px;background:#000"></div>
<div class="c" style="left:12.5px;top:255px;width:97.5px;height:15px;"><span style="display:inline-block;transform:scaleX(0.889);transform-origin:0 50%;white-space:pre">DEB45</span></div>
<div class="c" style="left:112.5px;top:255px;width:62.5px;height:15px;"><span style="display:inline-block;transform:scaleX(0.906);transform-origin:0 50%;white-space:pre">SMITH</span></div>
<div class="c" style="left:177.5px;top:255px;width:37.5px;height:15px;"><span style="display:inline-block;transform:scaleX(0.909);transform-origin:0 50%;white-space:pre">JJ</span></div>
<div class="c" style="left:217.5px;top:255px;width:78.5px;height:15px;"><span style="display:inline-block;transform:scaleX(0.904);transform-origin:0 50%;white-space:pre">JACOB JAYSON</span></div>
<div class="c" style="left:298.5px;top:255px;width:87.5px;height:15px;"><span style="display:inline-block;transform:scaleX(0.992);transform-origin:0 50%;white-space:pre">651105083084</span></div>
<div class="c" style="left:388.5px;top:255px;width:121.5px;height:15px;"><span style="display:inline-block;transform:scaleX(0.882);transform-origin:0 50%;white-space:pre">DISCOVERY</span></div>
<div class="c" style="left:512.5px;top:255px;width:97.5px;height:15px;"><span style="display:inline-block;transform:scaleX(0.981);transform-origin:0 50%;white-space:pre">56898745</span></div>
<div class="c" style="left:612.5px;top:255px;width:117.5px;height:15px;"><span style="display:inline-block;transform:scaleX(0.933);transform-origin:0 50%;white-space:pre">698 LYDIA AVENUE</span></div>
<div class="c" style="left:732.5px;top:255px;width:77.5px;height:15px;text-align:center;padding-right:4px;"><span style="display:inline-block;transform:scaleX(0.981);transform-origin:50% 50%;white-space:pre">0</span></div>
<div class="c" style="left:812.5px;top:255px;width:38.5px;height:15px;text-align:right;padding-right:3px;"><span style="display:inline-block;transform:scaleX(0.981);transform-origin:100% 50%;white-space:pre">9.06</span></div>
<div class="c" style="left:853.5px;top:255px;width:57.5px;height:15px;"><span style="display:inline-block;transform:scaleX(0.892);transform-origin:0 50%;white-space:pre">NORMAL</span></div>
<div class="c" style="left:913.5px;top:255px;width:19.5px;height:15px;"><span style="display:inline-block;transform:scaleX(0.818);transform-origin:0 50%;white-space:pre">E</span></div>
<div class="c" style="left:935.5px;top:255px;width:46.5px;height:15px;"><span style="display:inline-block;transform:scaleX(0.981);transform-origin:0 50%;white-space:pre">0635289600</span></div>
<div style="left:0;top:270px;width:10px;height:17px;background:#f0f0f0;box-shadow:inset 1px 1px 0 #fff"></div>
<div style="left:0;top:287px;width:982px;height:1px;background:#a0a0a0"></div>
<div style="left:0;top:287px;width:11px;height:1px;background:#000"></div>
<div class="c" style="left:12.5px;top:273px;width:97.5px;height:15px;"><span style="display:inline-block;transform:scaleX(0.889);transform-origin:0 50%;white-space:pre">DEB32</span></div>
<div class="c" style="left:112.5px;top:273px;width:62.5px;height:15px;"><span style="display:inline-block;transform:scaleX(0.906);transform-origin:0 50%;white-space:pre">SMITH</span></div>
<div class="c" style="left:177.5px;top:273px;width:37.5px;height:15px;"><span style="display:inline-block;transform:scaleX(0.881);transform-origin:0 50%;white-space:pre">AG</span></div>
<div class="c" style="left:217.5px;top:273px;width:78.5px;height:15px;"><span style="display:inline-block;transform:scaleX(0.859);transform-origin:0 50%;white-space:pre">ALLEN GEORGE</span></div>
<div class="c" style="left:298.5px;top:273px;width:87.5px;height:15px;"><span style="display:inline-block;transform:scaleX(0.981);transform-origin:0 50%;white-space:pre">6101016060080</span></div>
<div class="c" style="left:388.5px;top:273px;width:121.5px;height:15px;"><span style="display:inline-block;transform:scaleX(0.910);transform-origin:0 50%;white-space:pre">PRIVATE COMPANY</span></div>
<div class="c" style="left:512.5px;top:273px;width:97.5px;height:15px;"><span style="display:inline-block;transform:scaleX(0.981);transform-origin:0 50%;white-space:pre">000</span></div>
<div class="c" style="left:732.5px;top:273px;width:77.5px;height:15px;text-align:center;padding-right:4px;"><span style="display:inline-block;transform:scaleX(0.981);transform-origin:50% 50%;white-space:pre">0</span></div>
<div class="c" style="left:812.5px;top:273px;width:38.5px;height:15px;text-align:right;padding-right:3px;"><span style="display:inline-block;transform:scaleX(0.981);transform-origin:100% 50%;white-space:pre">0.00</span></div>
<div class="c" style="left:853.5px;top:273px;width:57.5px;height:15px;"><span style="display:inline-block;transform:scaleX(0.892);transform-origin:0 50%;white-space:pre">NORMAL</span></div>
<div class="c" style="left:913.5px;top:273px;width:19.5px;height:15px;"><span style="display:inline-block;transform:scaleX(0.818);transform-origin:0 50%;white-space:pre">E</span></div>
<div class="c" style="left:935.5px;top:273px;width:46.5px;height:15px;"><span style="display:inline-block;transform:scaleX(0.981);transform-origin:0 50%;white-space:pre">0810000000</span></div>
<div style="left:10px;top:0;width:1px;height:282px;background:#000"></div>
<div style="left:110px;top:0;width:1px;height:282px;background:#a0a0a0"></div>
<div style="left:175px;top:0;width:1px;height:282px;background:#a0a0a0"></div>
<div style="left:215px;top:0;width:1px;height:282px;background:#a0a0a0"></div>
<div style="left:296px;top:0;width:1px;height:282px;background:#a0a0a0"></div>
<div style="left:386px;top:0;width:1px;height:282px;background:#a0a0a0"></div>
<div style="left:510px;top:0;width:1px;height:282px;background:#a0a0a0"></div>
<div style="left:610px;top:0;width:1px;height:282px;background:#a0a0a0"></div>
<div style="left:730px;top:0;width:1px;height:282px;background:#a0a0a0"></div>
<div style="left:810px;top:0;width:1px;height:282px;background:#a0a0a0"></div>
<div style="left:851px;top:0;width:1px;height:282px;background:#a0a0a0"></div>
<div style="left:911px;top:0;width:1px;height:282px;background:#a0a0a0"></div>
<div style="left:933px;top:0;width:1px;height:282px;background:#a0a0a0"></div>
<div style="left:982px;top:0;width:1px;height:282px;background:#a0a0a0"></div>
<div style="left:110px;top:35px;width:1px;height:19px;border-left:1px dotted #c87828;"></div>
<div style="left:175px;top:35px;width:1px;height:19px;border-left:1px dotted #c87828;"></div>
<div style="left:215px;top:35px;width:1px;height:19px;border-left:1px dotted #c87828;"></div>
<div style="left:296px;top:35px;width:1px;height:19px;border-left:1px dotted #c87828;"></div>
<div style="left:386px;top:35px;width:1px;height:19px;border-left:1px dotted #c87828;"></div>
<div style="left:510px;top:35px;width:1px;height:19px;border-left:1px dotted #c87828;"></div>
<div style="left:610px;top:35px;width:1px;height:19px;border-left:1px dotted #c87828;"></div>
<div style="left:730px;top:35px;width:1px;height:19px;border-left:1px dotted #c87828;"></div>
<div style="left:810px;top:35px;width:1px;height:19px;border-left:1px dotted #c87828;"></div>
<div style="left:851px;top:35px;width:1px;height:19px;border-left:1px dotted #c87828;"></div>
<div style="left:911px;top:35px;width:1px;height:19px;border-left:1px dotted #c87828;"></div>
<div style="left:933px;top:35px;width:1px;height:19px;border-left:1px dotted #c87828;"></div>
</div>
<div style="left:7px;top:468px;width:696px;height:1px;background:#000;"></div>
<div class="dith" style="left:989px;top:167px;width:17px;height:301px;"></div>
<div style="left:989px;top:167px;width:17px;height:17px;background:#f0f0f0;border:1px solid #000;box-shadow:inset 1px 1px 0 #fff;"></div>
<svg style="left:0;top:0" width="1012" height="726"><path d="M993.0 178.0 L1002.0 178.0 L997.5 173.0 Z" fill="#000"/></svg>
<div style="left:989px;top:451px;width:17px;height:17px;background:#f0f0f0;border:1px solid #000;box-shadow:inset 1px 1px 0 #fff;"></div>
<svg style="left:0;top:0" width="1012" height="726"><path d="M993.0 457.0 L1002.0 457.0 L997.5 462.0 Z" fill="#000"/></svg>
<div style="left:989px;top:298px;width:17px;height:85px;background:#f0f0f0;border:1px solid #000;box-shadow:inset 1px 1px 0 #fff;"></div>
<div class="dith" style="left:7px;top:468px;width:982px;height:18px;"></div>
<div style="left:989px;top:468px;width:17px;height:18px;background:#f0f0f0;"></div>
<div style="left:7px;top:468px;width:16px;height:17px;background:#f0f0f0;border:1px solid #000;box-shadow:inset 1px 1px 0 #fff;"></div>
<svg style="left:0;top:0" width="1012" height="726"><path d="M17.5 472.0 L17.5 481.0 L12.5 476.5 Z" fill="#000"/></svg>
<div style="left:972px;top:468px;width:17px;height:17px;background:#f0f0f0;border:1px solid #000;box-shadow:inset 1px 1px 0 #fff;"></div>
<svg style="left:0;top:0" width="1012" height="726"><path d="M978.0 472.0 L978.0 481.0 L983.0 476.5 Z" fill="#000"/></svg>
<div style="left:22px;top:468px;width:681px;height:17px;background:#f0f0f0;border:1px solid #000;border-left:2px solid #000;box-shadow:inset 1px 1px 0 #fff;"></div>
<div style="left:5px;top:485px;width:1002px;height:1px;background:#a4a49c;"></div>
<div style="left:5px;top:486px;width:1002px;height:4px;background:#000080;"></div>
<div style="left:5px;top:490px;width:1002px;height:1px;background:#a4a49c;"></div>
<div style="left:45px;top:485px;width:16px;height:1px;background:#8484d4;"></div>
<div style="left:45px;top:490px;width:16px;height:1px;background:#8484d4;"></div>
<div style="left:45px;top:486px;width:16px;height:1px;background:#000050;"></div>
<div style="left:45px;top:489px;width:16px;height:1px;background:#000050;"></div>
<div style="left:5px;top:491px;width:1002px;height:137px;background:#fff;"></div>
<div style="left:5px;top:491px;width:1px;height:137px;background:#808080;"></div>
<div style="left:6px;top:491px;width:992px;height:1px;background:#000;"></div>
<div style="left:6px;top:491px;width:1px;height:77px;background:#000;"></div>
<div style="left:5px;top:628px;width:1002px;height:1px;background:#c8c8c8;"></div>
<div style="left:7px;top:492px;width:990px;height:17px;background:#f0f0f0;"></div>
<div style="left:7px;top:492px;width:10px;height:17px;box-shadow:inset 1px 1px 0 #fff;"></div>
<div style="left:19px;top:492px;width:88px;height:17px;box-shadow:inset 1px 1px 0 #fff;"></div>
<div style="left:109px;top:492px;width:43px;height:17px;box-shadow:inset 1px 1px 0 #fff;"></div>
<div style="left:154px;top:492px;width:198px;height:17px;box-shadow:inset 1px 1px 0 #fff;"></div>
<div style="left:354px;top:492px;width:198px;height:17px;box-shadow:inset 1px 1px 0 #fff;"></div>
<div style="left:554px;top:492px;width:98px;height:17px;box-shadow:inset 1px 1px 0 #fff;"></div>
<div style="left:654px;top:492px;width:62px;height:17px;box-shadow:inset 1px 1px 0 #fff;"></div>
<div style="left:718px;top:492px;width:58px;height:17px;box-shadow:inset 1px 1px 0 #fff;"></div>
<div style="left:778px;top:492px;width:98px;height:17px;box-shadow:inset 1px 1px 0 #fff;"></div>
<div style="left:878px;top:492px;width:58px;height:17px;box-shadow:inset 1px 1px 0 #fff;"></div>
<div style="left:938px;top:492px;width:58px;height:17px;box-shadow:inset 1px 1px 0 #fff;"></div>
<div style="left:7px;top:509px;width:990px;height:1px;background:#000;"></div>
<div style="left:17px;top:492px;width:2px;height:18px;background:#000;"></div>
<div style="left:107px;top:492px;width:1px;height:18px;background:#000;"></div>
<div class="c" style="left:20px;top:495px;width:87px;height:14px"><span style="display:inline-block;transform:scaleX(0.968);transform-origin:0 50%;white-space:pre">Patient Number</span></div>
<div style="left:152px;top:492px;width:1px;height:18px;background:#000;"></div>
<div class="c" style="left:110px;top:495px;width:42px;height:14px"><span style="display:inline-block;transform:scaleX(0.954);transform-origin:0 50%;white-space:pre">Gender</span></div>
<div style="left:352px;top:492px;width:1px;height:18px;background:#000;"></div>
<div class="c" style="left:155px;top:495px;width:197px;height:14px"><span style="display:inline-block;transform:scaleX(0.960);transform-origin:0 50%;white-space:pre">Patient Name</span></div>
<div style="left:552px;top:492px;width:1px;height:18px;background:#000;"></div>
<div class="c" style="left:355px;top:495px;width:197px;height:14px"><span style="display:inline-block;transform:scaleX(0.964);transform-origin:0 50%;white-space:pre">Patient Surname</span></div>
<div style="left:652px;top:492px;width:1px;height:18px;background:#000;"></div>
<div class="c" style="left:555px;top:495px;width:97px;height:14px"><span style="display:inline-block;transform:scaleX(0.991);transform-origin:0 50%;white-space:pre">Date Of Birth</span></div>
<div style="left:716px;top:492px;width:1px;height:18px;background:#000;"></div>
<div class="c" style="left:655px;top:495px;width:61px;height:14px"><span style="display:inline-block;transform:scaleX(0.971);transform-origin:0 50%;white-space:pre">Age</span></div>
<div style="left:776px;top:492px;width:1px;height:18px;background:#000;"></div>
<div class="c" style="left:719px;top:495px;width:57px;height:14px"><span style="display:inline-block;transform:scaleX(0.942);transform-origin:0 50%;white-space:pre">Dep.No.</span></div>
<div style="left:876px;top:492px;width:1px;height:18px;background:#000;"></div>
<div class="c" style="left:779px;top:495px;width:97px;height:14px"><span style="display:inline-block;transform:scaleX(0.924);transform-origin:0 50%;white-space:pre">File No.</span></div>
<div style="left:936px;top:492px;width:1px;height:18px;background:#000;"></div>
<div class="c" style="left:879px;top:495px;width:57px;height:14px"><span style="display:inline-block;transform:scaleX(0.981);transform-origin:0 50%;white-space:pre">Length</span></div>
<div style="left:996px;top:492px;width:1px;height:18px;background:#000;"></div>
<div class="c" style="left:939px;top:495px;width:57px;height:14px"><span style="display:inline-block;transform:scaleX(0.999);transform-origin:0 50%;white-space:pre">Weight</span></div>
<svg style="left:9px;top:496px" width="8" height="9" viewBox="0 0 8 9" shape-rendering="crispEdges"><g fill="#000"><rect x="0" y="0" width="1" height="1"/><rect x="0" y="4" width="1" height="1"/><rect x="0" y="8" width="1" height="1"/><rect x="2" y="0" width="4" height="1"/><rect x="2" y="2" width="4" height="1"/><rect x="2" y="4" width="4" height="1"/><rect x="2" y="6" width="4" height="1"/><rect x="2" y="8" width="4" height="1"/></g></svg>
<div style="left:7px;top:510px;width:990px;height:18px;background:#f0f0f0;"></div>
<div style="left:7px;top:510px;width:10px;height:18px;background:#f0f0f0;box-shadow:inset 1px 1px 0 #fff;"></div>
<div style="left:7px;top:528px;width:990px;height:1px;background:#a0a0a0;"></div>
<div style="left:7px;top:528px;width:11px;height:1px;background:#000;"></div>
<svg style="left:9px;top:513px" width="7" height="11" viewBox="0 0 7 11"><path d="M0.5 0 L6 5.5 L0.5 11 Z" fill="#000"/></svg>
<div class="c" style="left:19.5px;top:513px;width:86.5px;height:15px;"><span style="display:inline-block;transform:scaleX(0.981);transform-origin:0 50%;white-space:pre">000002601</span></div>
<div class="c" style="left:154.5px;top:513px;width:196.5px;height:15px;"><span style="display:inline-block;transform:scaleX(0.895);transform-origin:0 50%;white-space:pre">ANONY</span></div>
<div class="c" style="left:354.5px;top:513px;width:196.5px;height:15px;"><span style="display:inline-block;transform:scaleX(0.868);transform-origin:0 50%;white-space:pre">MOUSE</span></div>
<div class="c" style="left:554.5px;top:513px;width:96.5px;height:15px;"><span style="display:inline-block;transform:scaleX(0.995);transform-origin:0 50%;white-space:pre">25-12-1969</span></div>
<div class="c" style="left:654.5px;top:513px;width:60.5px;height:15px;text-align:right;padding-right:2px;"><span style="display:inline-block;transform:scaleX(0.981);transform-origin:100% 50%;white-space:pre">51</span></div>
<div class="c" style="left:718.5px;top:513px;width:56.5px;height:15px;"><span style="display:inline-block;transform:scaleX(0.981);transform-origin:0 50%;white-space:pre">00</span></div>
<svg style="left:114px;top:511px" width="10" height="16" viewBox="0 0 10 16"><path d="M3.7 9.2 h2.6 v2 h2.5 v2.6 h-2.5 v1.9 h-2.6 v-1.9 h-2.5 v-2.6 h2.5 z" fill="#fadcf5" stroke="#e689dc" stroke-width="0.8"/><circle cx="5" cy="5" r="4.4" fill="#f8cdf0" stroke="#e689dc" stroke-width="0.8"/><circle cx="5" cy="5" r="2" fill="#fff" stroke="#ec9fe2" stroke-width="0.7"/></svg>
<div style="left:7px;top:529px;width:990px;height:18px;background:#fff;"></div>
<div style="left:7px;top:529px;width:10px;height:18px;background:#f0f0f0;box-shadow:inset 1px 1px 0 #fff;"></div>
<div style="left:7px;top:547px;width:990px;height:1px;background:#a0a0a0;"></div>
<div style="left:7px;top:547px;width:11px;height:1px;background:#000;"></div>
<div class="c" style="left:19.5px;top:532px;width:86.5px;height:15px;color:#c71585;"><span style="display:inline-block;transform:scaleX(0.981);transform-origin:0 50%;white-space:pre">000002602</span></div>
<div class="c" style="left:154.5px;top:532px;width:196.5px;height:15px;color:#c71585;"><span style="display:inline-block;transform:scaleX(0.922);transform-origin:0 50%;white-space:pre">ANINY</span></div>
<div class="c" style="left:354.5px;top:532px;width:196.5px;height:15px;color:#c71585;"><span style="display:inline-block;transform:scaleX(0.868);transform-origin:0 50%;white-space:pre">MOUSE</span></div>
<div class="c" style="left:554.5px;top:532px;width:96.5px;height:15px;color:#c71585;"><span style="display:inline-block;transform:scaleX(0.995);transform-origin:0 50%;white-space:pre">26-04-1988</span></div>
<div class="c" style="left:654.5px;top:532px;width:60.5px;height:15px;text-align:right;padding-right:2px;color:#c71585;"><span style="display:inline-block;transform:scaleX(0.981);transform-origin:100% 50%;white-space:pre">33</span></div>
<div class="c" style="left:718.5px;top:532px;width:56.5px;height:15px;color:#c71585;"><span style="display:inline-block;transform:scaleX(0.981);transform-origin:0 50%;white-space:pre">01</span></div>
<svg style="left:114px;top:530px" width="10" height="16" viewBox="0 0 10 16"><path d="M3.7 9.2 h2.6 v2 h2.5 v2.6 h-2.5 v1.9 h-2.6 v-1.9 h-2.5 v-2.6 h2.5 z" fill="#fadcf5" stroke="#e689dc" stroke-width="0.8"/><circle cx="5" cy="5" r="4.4" fill="#f8cdf0" stroke="#e689dc" stroke-width="0.8"/><circle cx="5" cy="5" r="2" fill="#fff" stroke="#ec9fe2" stroke-width="0.7"/></svg>
<div style="left:7px;top:548px;width:990px;height:18px;background:#fff;"></div>
<div style="left:7px;top:548px;width:10px;height:18px;background:#f0f0f0;box-shadow:inset 1px 1px 0 #fff;"></div>
<div style="left:7px;top:566px;width:990px;height:1px;background:#a0a0a0;"></div>
<div style="left:7px;top:566px;width:11px;height:1px;background:#000;"></div>
<div class="c" style="left:19.5px;top:551px;width:86.5px;height:15px;color:#c71585;"><span style="display:inline-block;transform:scaleX(0.981);transform-origin:0 50%;white-space:pre">000002603</span></div>
<div class="c" style="left:154.5px;top:551px;width:196.5px;height:15px;color:#c71585;"><span style="display:inline-block;transform:scaleX(0.926);transform-origin:0 50%;white-space:pre">ALILY</span></div>
<div class="c" style="left:354.5px;top:551px;width:196.5px;height:15px;color:#c71585;"><span style="display:inline-block;transform:scaleX(0.868);transform-origin:0 50%;white-space:pre">MOUSE</span></div>
<div class="c" style="left:554.5px;top:551px;width:96.5px;height:15px;color:#c71585;"><span style="display:inline-block;transform:scaleX(0.995);transform-origin:0 50%;white-space:pre">20-01-2005</span></div>
<div class="c" style="left:654.5px;top:551px;width:60.5px;height:15px;text-align:right;padding-right:2px;color:#c71585;"><span style="display:inline-block;transform:scaleX(0.981);transform-origin:100% 50%;white-space:pre">16</span></div>
<div class="c" style="left:718.5px;top:551px;width:56.5px;height:15px;color:#c71585;"><span style="display:inline-block;transform:scaleX(0.981);transform-origin:0 50%;white-space:pre">02</span></div>
<svg style="left:114px;top:549px" width="10" height="16" viewBox="0 0 10 16"><path d="M3.7 9.2 h2.6 v2 h2.5 v2.6 h-2.5 v1.9 h-2.6 v-1.9 h-2.5 v-2.6 h2.5 z" fill="#fadcf5" stroke="#e689dc" stroke-width="0.8"/><circle cx="5" cy="5" r="4.4" fill="#f8cdf0" stroke="#e689dc" stroke-width="0.8"/><circle cx="5" cy="5" r="2" fill="#fff" stroke="#ec9fe2" stroke-width="0.7"/></svg>
<div style="left:17px;top:510px;width:1px;height:57px;background:#000;"></div>
<div style="left:107px;top:510px;width:1px;height:57px;background:#a0a0a0;"></div>
<div style="left:152px;top:510px;width:1px;height:57px;background:#a0a0a0;"></div>
<div style="left:352px;top:510px;width:1px;height:57px;background:#a0a0a0;"></div>
<div style="left:552px;top:510px;width:1px;height:57px;background:#a0a0a0;"></div>
<div style="left:652px;top:510px;width:1px;height:57px;background:#a0a0a0;"></div>
<div style="left:716px;top:510px;width:1px;height:57px;background:#a0a0a0;"></div>
<div style="left:776px;top:510px;width:1px;height:57px;background:#a0a0a0;"></div>
<div style="left:876px;top:510px;width:1px;height:57px;background:#a0a0a0;"></div>
<div style="left:936px;top:510px;width:1px;height:57px;background:#a0a0a0;"></div>
<div style="left:996px;top:510px;width:1px;height:57px;background:#a0a0a0;"></div>
<div class="btn" style="left:10px;top:656px;width:105px;height:40px;"></div>
<div class="t" style="left:45px;top:657px;width:60px;text-align:center;"><span style="display:inline-block;transform:scaleX(0.934);transform-origin:50% 50%;white-space:pre">Send</span></div>
<div class="t" style="left:45px;top:670px;width:60px;text-align:center;"><span style="display:inline-block;transform:scaleX(0.945);transform-origin:50% 50%;white-space:pre">Payment</span></div>
<div class="t" style="left:45px;top:683px;width:60px;text-align:center;"><span style="display:inline-block;transform:scaleX(0.976);transform-origin:50% 50%;white-space:pre">Request</span></div>
<svg style="left:27px;top:664px" width="24" height="23" viewBox="0 0 24 23">
<defs><linearGradient id="cg" x1="0" y1="0" x2="1" y2="0.6"><stop offset="0" stop-color="#3b97ea"/><stop offset="0.5" stop-color="#1f6fd0"/><stop offset="1" stop-color="#0f47a6"/></linearGradient></defs>
<g transform="rotate(30 12.4 11.1)"><rect x="3.4" y="4.85" width="18" height="12.5" rx="1.6" fill="#2a72cc" stroke="#1a56ae" stroke-width="0.7"/><rect x="4.4" y="6" width="16" height="1.6" fill="#5aa2ee"/></g>
<g transform="rotate(15 11.4 12.2)"><rect x="2.4" y="5.95" width="18" height="12.5" rx="1.6" fill="#2d78d2" stroke="#1a56ae" stroke-width="0.7"/><rect x="3.4" y="7" width="16" height="1.6" fill="#62a8f0"/></g>
<g transform="rotate(-2 10 13.6)"><rect x="1" y="7.3" width="18" height="12.5" rx="1.6" fill="url(#cg)" stroke="#1550a8" stroke-width="0.7"/>
<text x="9.6" y="11.9" font-family="Liberation Sans, sans-serif" font-size="4.2" font-weight="bold" font-style="italic" fill="#fff">VISA</text>
<g fill="#8fc4f6"><rect x="2.8" y="13.6" width="2.4" height="1"/><rect x="6.2" y="13.6" width="2.6" height="1"/><rect x="10" y="13.6" width="2.6" height="1"/><rect x="13.8" y="13.6" width="2.6" height="1"/></g>
<rect x="13.6" y="16" width="3.8" height="2" fill="#dbe8fa"/></g>
</svg>
<div class="btn" style="left:118px;top:656px;width:91px;height:40px;"></div>
<div class="btn" style="left:208px;top:656px;width:15px;height:40px;"></div>
<div class="t" style="left:157px;top:670px;"><span style="display:inline-block;transform:scaleX(0.926);transform-origin:0 50%;white-space:pre">SyncVite</span></div>
<svg style="left:131px;top:664px" width="23" height="25" viewBox="0 0 23 25"><path d="M14.02 1.19 L12.66 1.12 L11.31 1.19 L9.98 1.40 L8.70 1.75 L7.46 2.24 L6.30 2.84 L5.21 3.57 L4.22 4.40 L3.32 5.32 L2.54 6.33 L1.87 7.41 L1.33 8.54 L0.91 9.72 L0.62 10.92 L0.47 12.14 L0.45 13.36 L0.56 14.56 L0.79 15.74 L1.15 16.88 L1.62 17.96 L2.20 18.98 L2.88 19.92 L3.65 20.78 L4.50 21.54 L5.42 22.20 L6.40 22.76 L7.42 23.20 L8.47 23.53 L9.55 23.74 L10.63 23.83 L11.70 23.81 L12.76 23.67 L13.79 23.43 L14.77 23.07 L15.71 22.62 L16.58 22.08 L17.38 21.45 L18.10 20.75 L18.74 19.98 L19.28 19.15 L19.73 18.28 L20.08 17.37 L20.33 16.44 L20.47 15.50 L20.52 14.56 L20.46 13.63 L20.30 12.72 L20.05 11.84 L19.71 11.01 L19.29 10.22 L18.79 9.49 L18.22 8.83 L17.59 8.23 L16.90 7.72 L16.18 7.28 L15.42 6.93 L14.63 6.67 L13.83 6.50 L13.03 6.41 L12.23 6.41 L11.45 6.50 L10.68 6.67 L9.95 6.91 L9.26 7.23 L8.62 7.62 L8.03 8.07 L7.50 8.57 L7.03 9.12 L6.63 9.71 L6.30 10.33 L6.04 10.98 L5.86 11.64 L5.75 12.30 L5.72 12.97 L5.75 13.62 L5.86 14.26 L6.03 14.88 L6.26 15.46 L6.55 16.00 L6.90 16.51 L7.29 16.96 L7.72 17.36 L8.18 17.71 L8.67 18.00 L9.18 18.23 L9.71 18.41 L10.24 18.52 L10.77 18.57 L11.29 18.56 L11.80 18.50 L11.80 13.80" fill="none" stroke="#76c7c4" stroke-width="1.15" stroke-linejoin="round"/><circle cx="11.8" cy="13.8" r="0.9" fill="#2a1a4a"/></svg>
<svg style="left:212px;top:674px" width="7" height="4" viewBox="0 0 7 4"><path d="M0 0 L7 0 L3.5 4 Z" fill="#000"/></svg>
<div class="btn" style="left:333px;top:656px;width:105px;height:40px;"></div>
<div class="t" style="left:372px;top:670px;"><span style="display:inline-block;transform:scaleX(0.969);transform-origin:0 50%;white-space:pre">Validation</span></div>
<div class="btn" style="left:440px;top:656px;width:105px;height:40px;"></div>
<div class="t" style="left:472px;top:670px;"><span style="display:inline-block;transform:scaleX(0.982);transform-origin:0 50%;white-space:pre">Options (F8)</span></div>
<div class="btn" style="left:547px;top:656px;width:105px;height:40px;"></div>
<div class="t" style="left:577px;top:670px;"><span style="display:inline-block;transform:scaleX(0.985);transform-origin:0 50%;white-space:pre">Account (F9)</span></div>
<div class="btn" style="left:654px;top:656px;width:105px;height:40px;"></div>
<div class="t" style="left:681px;top:670px;"><span style="display:inline-block;transform:scaleX(0.996);transform-origin:0 50%;white-space:pre">Patients (F11)</span></div>
<div class="btn" style="left:781px;top:656px;width:105px;height:40px;"></div>
<div class="t" style="left:825px;top:670px;"><span style="display:inline-block;transform:scaleX(0.946);transform-origin:0 50%;white-space:pre">OK (F2)</span></div>
<div class="btn" style="left:888px;top:656px;width:105px;height:40px;"></div>
<div class="t" style="left:926px;top:670px;"><span style="display:inline-block;transform:scaleX(0.965);transform-origin:0 50%;white-space:pre">Exit (F10)</span></div>
<svg style="left:352px;top:668px" width="16" height="16" viewBox="0 0 16 16"><defs><linearGradient id="vb" x1="0" y1="0" x2="0" y2="1"><stop offset="0" stop-color="#ffffff"/><stop offset="0.5" stop-color="#f0f5fa"/><stop offset="0.52" stop-color="#dfeaf5"/><stop offset="1" stop-color="#d4e4f2"/></linearGradient></defs><path d="M2 0.5 h12 a1.5 1.5 0 0 1 1.5 1.5 v9 a1.5 1.5 0 0 1 -1.5 1.5 h-8.3 l-2.9 2.8 l0.3 -2.8 h-1.1 a1.5 1.5 0 0 1 -1.5 -1.5 v-9 a1.5 1.5 0 0 1 1.5 -1.5 z" fill="url(#vb)" stroke="#dde2e8" stroke-width="0.9"/><text x="7.6" y="9.6" font-size="8.5" font-weight="bold" text-anchor="middle" fill="#2a2a2a" font-family="Liberation Sans, sans-serif">?</text></svg>
<svg style="left:452px;top:667px" width="15" height="16" viewBox="0 0 15 16"><rect x="1.2" y="0.9" width="9.6" height="3.6" fill="#f9f7f0" stroke="#d6dcd0" stroke-width="0.8"/><rect x="0.8" y="6.1" width="10.8" height="1.4" fill="#4868cc"/><rect x="0.8" y="7.4" width="10.8" height="1.4" fill="#141868"/><path d="M11.4 7.2 L14.2 10.6 L12.6 10.9 Z" fill="#111"/><rect x="1.2" y="10" width="9.6" height="5.8" fill="#dcead6"/><rect x="2" y="12" width="8" height="0.9" fill="#fbfdf8"/><rect x="2" y="14" width="8" height="0.9" fill="#fbfdf8"/></svg>
<svg style="left:560px;top:669px" width="12" height="14" viewBox="0 0 12 14"><rect x="0.5" y="0.5" width="11" height="13" fill="#ececec" stroke="#8a8a8a" stroke-width="1"/><rect x="1" y="1" width="10" height="12" fill="none" stroke="#fafafa" stroke-width="0.6"/><rect x="2" y="2" width="7.6" height="2.8" fill="#4a74b8"/><rect x="2" y="4.6" width="7.6" height="0.9" fill="#b8c8f0"/><g fill="#9a9a9a"><rect x="2.2" y="6.2" width="1.8" height="0.9"/><rect x="5.1" y="6.2" width="1.8" height="0.9"/><rect x="2.2" y="8.2" width="1.8" height="0.9"/><rect x="5.1" y="8.2" width="1.8" height="0.9"/><rect x="8" y="8.2" width="1.8" height="0.9"/><rect x="2.2" y="10.2" width="1.8" height="0.9"/><rect x="5.1" y="10.2" width="1.8" height="0.9"/><rect x="8" y="10.2" width="1.8" height="0.9"/></g><rect x="7.4" y="6" width="3" height="1.6" fill="#f0c0c0"/><rect x="8" y="6.1" width="1.9" height="1" fill="#c85050"/></svg>
<svg style="left:663px;top:669px" width="14" height="15" viewBox="0 0 14 15"><defs><linearGradient id="gg" x1="0" y1="0" x2="0" y2="1"><stop offset="0" stop-color="#72cc1a"/><stop offset="1" stop-color="#3a960c"/></linearGradient><linearGradient id="bg" x1="0" y1="0" x2="0" y2="1"><stop offset="0" stop-color="#2b7fc6"/><stop offset="1" stop-color="#1c62a8"/></linearGradient></defs><rect x="0" y="0" width="12" height="5" fill="#2c171a"/><ellipse cx="2.7" cy="3.3" rx="1.5" ry="2.1" fill="#e6cdbb"/><path d="M1.2 2.6 q1.5 -2.4 3.4 -0.6 l-0.3 1 q-1.4 -1.2 -3.1 -0.4z" fill="#3a2420"/><rect x="0" y="4.2" width="6" height="6.4" fill="url(#gg)"/><ellipse cx="7.6" cy="3.8" rx="1.8" ry="2.7" fill="#ecd3b8"/><path d="M5.8 3 q1.6 -3 4.6 -1 l0.6 2.6 q-1.2 -2.6 -5.2 -1.6z" fill="#3b2a22"/><rect x="4" y="6" width="10" height="8.7" fill="url(#bg)"/><rect x="7" y="5.6" width="2" height="2" fill="#e4b58a"/><path d="M11.6 6.8 L14 6.8 L14 8.8 Z" fill="#c8f4fc"/></svg>
<svg style="left:805.5px;top:668.5px" width="15" height="14.5" viewBox="0 0 15 14.5"><defs><linearGradient id="og" x1="0" y1="0" x2="0" y2="1"><stop offset="0" stop-color="#52c852"/><stop offset="0.5" stop-color="#2ea836"/><stop offset="1" stop-color="#1c7e22"/></linearGradient></defs><rect x="0.4" y="0.4" width="14.2" height="13.7" rx="1.6" fill="url(#og)" stroke="#2a8a30" stroke-width="0.8"/><path d="M2.4 5.6 h5 v-3.2 l5.4 4.85 l-5.4 4.85 v-3.2 h-5 z" fill="#fff"/></svg>
<svg style="left:906.7px;top:668px" width="16.4" height="16" viewBox="0 0 16.4 16"><defs><radialGradient id="eg" cx="50%" cy="30%" r="75%"><stop offset="0" stop-color="#ee7a7a"/><stop offset="0.55" stop-color="#d23c3c"/><stop offset="1" stop-color="#a81e1e"/></radialGradient></defs><ellipse cx="8.2" cy="8" rx="8" ry="7.9" fill="url(#eg)"/><path d="M5.9 5.7 L10.5 10.3 M10.5 5.7 L5.9 10.3" stroke="#fff" stroke-width="2.3" stroke-linecap="butt"/></svg>
<div style="left:2px;top:711px;width:199px;height:13px;border-top:1px solid #a0a0a0;border-left:1px solid #a0a0a0;"></div>
<div style="left:203px;top:711px;width:148px;height:13px;border-top:1px solid #a0a0a0;border-left:1px solid #a0a0a0;"></div>
<div style="left:353px;top:711px;width:657px;height:13px;border-top:1px solid #a0a0a0;border-left:1px solid #a0a0a0;"></div>
<div class="t" style="left:3px;top:711px;font-size:12.5px;line-height:14px;-webkit-text-stroke:0;"><span style="display:inline-block;transform:scaleX(0.919);transform-origin:0 50%;white-space:pre">Full</span></div>
<div class="t" style="left:205px;top:711px;font-size:12.5px;line-height:14px;-webkit-text-stroke:0;"><span style="display:inline-block;transform:scaleX(0.897);transform-origin:0 50%;white-space:pre">Record(s) : 47</span></div>
<div class="t" style="left:355px;top:711px;font-size:12.5px;line-height:14px;-webkit-text-stroke:0;"><span style="display:inline-block;transform:scaleX(0.881);transform-origin:0 50%;white-space:pre">16 ms</span></div>
<div style="left:0px;top:723px;width:1012px;height:1px;background:#fff;"></div>
<div style="left:0px;top:724px;width:1012px;height:1px;background:#4a7aac;"></div>
<div style="left:0px;top:725px;width:1012px;height:1px;background:#c4f0fa;"></div>
</div></body></html>
